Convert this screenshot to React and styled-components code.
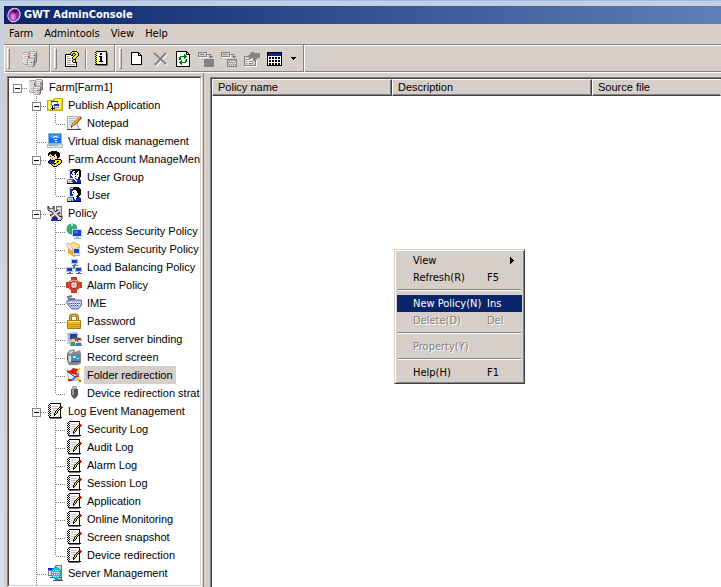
import React from "react";
import styled, { createGlobalStyle, css } from "styled-components";

const face = "#d6cec8";
const shadow = "#848284";
const dark = "#424142";
const navy = "#0a246a";
const tahoma = '"DejaVu Sans Condensed", Tahoma, sans-serif';
const sans = '"Liberation Sans", Arial, sans-serif';

const GlobalStyle = createGlobalStyle`
  * {
    box-sizing: border-box;
  }
  body {
    margin: 0;
    overflow: hidden;
    font: 11px/18px ${sans};
    color: #000;
  }
  button {
    font: inherit;
    color: inherit;
    border: 0;
    padding: 0;
    background: none;
  }
`;

const Desktop = styled.div`
  height: 100vh;
  padding: 5px 0 0 4px;
  border-top: 1px solid #9dbde4;
  background: linear-gradient(#c5cfe2, #d4dff0);
`;

const Window = styled.main`
  display: flex;
  flex-direction: column;
  height: 100%;
  background: ${face};
`;

const TitleBar = styled.header`
  display: flex;
  align-items: center;
  gap: 2px;
  height: 18px;
  padding-left: 2px;
  color: #fff;
  background: linear-gradient(to right, ${navy}, #5f80b6);
`;

const Title = styled.h1`
  margin: 0;
  font: bold 11px/18px ${tahoma};
`;

const MenuBar = styled.nav`
  display: flex;
  gap: 11px;
  height: 20px;
  padding-left: 5px;
  font-family: ${tahoma};
`;

const MenuButton = styled.button`
  line-height: 20px;
`;

const Toolbar = styled.div`
  display: flex;
  height: 29px;
  border-top: 1px solid ${shadow};
  border-bottom: 1px solid #fff;
  box-shadow: inset 1px 1px #fff, inset 0 -1px ${shadow};
`;

const Band = styled.div`
  display: flex;
  align-items: center;
  padding: 1px ${p => p.$end || 3}px 1px 3px;
  border-right: 1px solid ${shadow};
  box-shadow: 1px 0 #fff;
  margin-right: 1px;
`;

const Grip = styled.span`
  width: 3px;
  height: 21px;
  margin-right: ${p => p.$gap || 3}px;
  border: 1px solid;
  border-color: #fff ${shadow} ${shadow} #fff;
`;

const ToolButton = styled.button`
  display: flex;
  align-items: center;
  justify-content: center;
  width: ${p => (p.$narrow ? 14 : 23)}px;
  height: 22px;
`;

const Separator = styled.span`
  width: 2px;
  height: 20px;
  margin: 0 2px;
  border-left: 1px solid ${shadow};
  border-right: 1px solid #fff;
`;

const Body = styled.div`
  display: flex;
  flex: 1;
  min-height: 0;
`;

const Side = styled.aside`
  display: flex;
  flex: none;
  width: 200px;
  padding: 3px 1px 0 3px;
  border-right: 1px solid ${shadow};
`;

const TreeFrame = styled.div`
  display: flex;
  flex: 1;
  min-width: 0;
  border: 1px solid;
  border-color: ${shadow} #fff #fff ${shadow};
`;

const Tree = styled.ul`
  flex: 1;
  min-width: 0;
  margin: 0;
  padding: 0;
  overflow: hidden;
  list-style: none;
  background: #fff;
  border: 1px solid;
  border-color: ${dark} ${face} ${face} ${dark};
`;

const Row = styled.li`
  display: flex;
  height: 18px;
  white-space: nowrap;
`;

const dotsDown = "repeating-linear-gradient(#848284 0 1px, transparent 1px 2px)";
const dotsAcross = "repeating-linear-gradient(90deg, #848284 0 1px, transparent 1px 2px)";

const Guide = styled.span`
  flex: none;
  width: 19px;
  padding: 6px 0 0 4px;
  background-image: ${p => (p.$down ? dotsDown : "none")}, ${p => (p.$across ? dotsAcross : "none")};
  background-size: 1px ${p => (p.$down === "half" ? 10 : 18)}px, 10px 1px;
  background-position: 8px 0, 9px 10px;
  background-repeat: no-repeat;
`;

const Expander = styled.button`
  display: block;
  width: 9px;
  height: 9px;
  border: 1px solid ${shadow};
  background: linear-gradient(#000, #000) center / 5px 1px no-repeat #fff;
`;

const Label = styled.span`
  margin-left: 2px;
  padding: 0 3px;
  background: ${p => (p.$selected ? face : "none")};
`;

const ListFrame = styled.section`
  position: relative;
  display: flex;
  flex: 1;
  min-width: 0;
  margin: 4px 0 0 6px;
  border-top: 1px solid ${shadow};
  border-left: 1px solid ${shadow};
`;

const List = styled.div`
  flex: 1;
  min-width: 0;
  border-top: 1px solid ${dark};
  border-left: 1px solid ${dark};
  background: #fff;
`;

const Table = styled.table`
  width: 100%;
  table-layout: fixed;
  border-collapse: separate;
  border-spacing: 0;
`;

const Th = styled.th`
  width: ${p => p.$width || "auto"};
  height: 17px;
  padding: 0 5px;
  font-weight: 400;
  line-height: 15px;
  text-align: left;
  background: ${face};
  border: 1px solid;
  border-color: #fff ${p => (p.$width ? dark : face)} ${dark} #fff;
  box-shadow: ${p => (p.$width ? css`inset -1px -1px ${shadow}` : css`inset 0 -1px ${shadow}`)};
`;

const ContextMenu = styled.div`
  position: absolute;
  left: 183px;
  top: 171px;
  width: 131px;
  padding: 2px;
  font-family: ${tahoma};
  background: ${face};
  border: 1px solid;
  border-color: ${face} ${dark} ${dark} ${face};
  box-shadow: inset 1px 1px #fff, inset -1px -1px ${shadow};
`;

const MenuItem = styled.button`
  display: grid;
  grid-template-columns: 74px 1fr 8px;
  align-items: center;
  width: 100%;
  height: 17px;
  padding: 0 4px 0 16px;
  line-height: 17px;
  text-align: left;
  white-space: nowrap;
  ${p => p.$active && css`
    color: #fff;
    background: ${navy};
  `}
  &:disabled {
    color: ${shadow};
    text-shadow: 1px 1px #fff;
  }
`;

const MenuRule = styled.hr`
  height: 2px;
  margin: 3px 1px 4px;
  border: 0;
  border-top: 1px solid ${shadow};
  border-bottom: 1px solid #fff;
`;

const IconSvg = styled.svg`
  flex: none;
  display: block;
  margin-top: ${p => (p.$row ? 1 : 0)}px;
`;

const palette = {
  k: "#000",
  w: "#fff",
  e: "#e6e6e6",
  l: "#c4c4c4",
  g: "#a4a4a4",
  d: "#707070",
  b: "#0a28c8",
  y: "#ffec30",
  r: "#d80000",
  n: "#20b020",
  f: "#ffe0b0",
  o: "#e8a010",
};

// small bitmaps, one letter of the palette for each pixel
function Pixels({ rows }) {
  return rows.map((row, y) =>
    [...row.matchAll(/([a-z])\1*/g)].map(m => (
      <rect key={y + "-" + m.index} x={m.index} y={y} width={m[0].length} height="1" fill={palette[m[1]]} />
    ))
  );
}

const farmRows = [
  "........gggggg..",
  "..ggggggeeeeeed.",
  ".geeeeedlllllld.",
  ".ellllggeeeelgd.",
  ".eeeeeggllllrgd.",
  ".ellllrgeeeelgd.",
  ".eeeeegdllllggd.",
  ".ellllggggggggd.",
  ".eeeegeeeeeedgd.",
  ".elllglllllldgd.",
  ".eeeegeeeelgdgd.",
  ".elllglllrlgdd..",
  ".geeegeeeelgd...",
  "..gggglllllgd...",
  ".....geeeelgd...",
  "......gggggd....",
];

const logRows = [
  "...kkkkkkkkkkk..",
  "..kwwwwwwwwwwk..",
  ".kwkwwwwwwwwwk..",
  "..kwwllllllwwkr.",
  ".kwkwwwwwwwwkrrr",
  "..kwwllllllkykr.",
  ".kwkwwwwwwkykk..",
  "..kwwllllkykwk..",
  ".kwkwwwwkykwwk..",
  "..kwwllwkykwwk..",
  ".kwkwwwkykwwwk..",
  "..kwwllkkwwwwk..",
  ".kwkwwwkwwwwwk..",
  "..kwwwwwwwwwwk..",
  "..kkkkkkkkkkkkk.",
  "...ddddddddddd..",
];

const helpRows = [
  "........kkkkk...",
  ".......kyyyyyk..",
  "......kyykkyyyk.",
  ".kkkkkkyk..kyyk.",
  ".kwwwwwkk.kyyyk.",
  ".kwggwwwwkyyyk..",
  ".kwwwwwwkyyyk...",
  ".kwggggwkyyk....",
  ".kwwwwwwwkkk....",
  ".kwggggwkyyk....",
  ".kwwwwwwkyyk....",
  ".kwggggwwkkkk...",
  ".kwwwwwwwwwwk...",
  ".kwggggggggwk...",
  ".kwwwwwwwwwwk...",
  ".kkkkkkkkkkkk...",
];

const aboutRows = [
  "...kkkkkkkkkkk..",
  "..kwywywywywwk..",
  "...kwwwkkwwwykd.",
  "..kywwwkkwwwwkd.",
  "...kwwwwwwwwykd.",
  "..kywwkkkwwwwkd.",
  "...kwwwkkwwwykd.",
  "..kywwwkkwwwwkd.",
  "...kwwwkkwwwykd.",
  "..kywwwkkwwwwkd.",
  "...kwwkkkkwwykd.",
  "..kywwwwwwwwwkd.",
  "...kwywywywywkd.",
  "..kkkkkkkkkkkkd.",
  "....ddddddddddd.",
];

const userRows = [
  "....ddddkkkkk...",
  "...deeekkkkkkk..",
  "...ebbbkkkkkkkk.",
  "...ebbkwwwkkkkk.",
  "...ebbwwwwwkkkk.",
  "...ebbwkwwwkkkk.",
  "...ebbwwwwwwkkk.",
  "...ebbbwwwwwkkk.",
  "...ebbbwwwwkkk..",
  "...eeeewwwkkk...",
  "..dddddkwwwkbb..",
  ".deeeeekwwkbbbb.",
  ".deggglbbwbbbbb.",
  ".dellnebbbbbbbb.",
  ".kkkkkkkkkkkkkk.",
];

const groupRows = [
  "....dddkkkkkkk..",
  "...deekkkkkkkkk.",
  "...ebkkwwkkkwkk.",
  "...ebkwwkkkwwkk.",
  "...ebkwwwkwwwkk.",
  "...ebwkwwkwkwkk.",
  "...ebwwwwwwwwkk.",
  "...ebbwwwkwwwkk.",
  "...ebbbwwwwwkk..",
  "...eeeewwkwwkk..",
  "..dddddbwwkbbb..",
  ".deeeedbbwwbbbb.",
  ".degggbbbbwbbbb.",
  ".dellelbbbbbbbb.",
  ".kkkkkkkkkkkkkk.",
];

const accountRows = [
  "....kkkkkk......",
  "..kkkkkkkkkk....",
  ".kkkkkkkkkkkk...",
  ".kkfkkkkfkkkk...",
  ".kfffkkffkkkk...",
  "..fkfffkffkkk...",
  "..ffffffffkk....",
  "...ffrffffk.....",
  "...kffffkkkkkk..",
  "..kbkkkkyyyyyok.",
  ".kbbbbbkyykkyyk.",
  ".kbbbbkyyokyyok.",
  "..kkrbbkkyyyok..",
  "....kyykyyykk...",
  ".....kyyyok.....",
  "......kkkk......",
];

const smallPc = (x, y) => (
  <g transform={`translate(${x} ${y})`}>
    <path fill="#b4c4ec" d="M0 0h7v5H0z" />
    <path fill="#1c3fc0" d="M1 1h5v3H1z" />
    <path fill="#5c6c9c" d="M3 5h2v1H3zM1 6h6v1H1z" />
  </g>
);

const icons = {
  logo: (
    <g shapeRendering="auto">
      <ellipse cx="8" cy="8" rx="6" ry="7" transform="rotate(25 8 8)" fill="#8a2a9c" stroke="#e8dcec" />
      <ellipse cx="7" cy="10" rx="3" ry="4" fill="#c860d4" />
      <path d="M6 5l2-2h3l1 2-3 1z" fill="#401050" />
      <path d="M7 8v4" stroke="#f4c8f8" />
    </g>
  ),
  farm: <Pixels rows={farmRows} />,
  publish: (
    <>
      <path fill="#fff060" stroke="#b8a828" d="M.5 3.500h6l1-2h8v12H.5z" />
      <path fill="#dcc828" d="M1 12h14v1H1zM14 3h1v10h-1z" />
      <path fill="#fff" stroke="#8490c0" d="M4.500 4.500h6v4h-6zM7.500 7.500h4v3h-4z" />
      <path fill="#2030a0" d="M4 4h7v1H4zM7 7h5v2H7z" />
      <path fill="#000" d="M6 9v4H5v-1H4v-1h1V9zM6 11h2v1H6z" />
    </>
  ),
  notepad: (
    <>
      <path fill="#ececec" stroke="#b0b0b0" d="M1.500 1.500h10v9l2 4h-12z" />
      <path stroke="#c0c0c0" d="M3 3.500h7M3 5.500h7M3 7.500h5M3 9.500h4" />
      <path stroke="#444" d="M1 14.500h14" />
      <g shapeRendering="auto">
        <path stroke="#683000" strokeWidth="3" d="M7 10l8-8" />
        <path stroke="#ffa424" strokeWidth="2" d="M7 10l7-8" />
        <path fill="#222" d="M5 13v-2l1-1 1 1z" />
      </g>
    </>
  ),
  disk: (
    <>
      <path fill="#1874e8" stroke="#88b8ec" d="M1.500 .5h13v10h-13z" />
      <path fill="#4aa4ff" d="M3 2h10v3H3z" />
      <path fill="none" stroke="#fff" d="M5.500 5.500l2-2h2l2 2M6.500 7.500l1-1h2l1 1" />
      <path fill="#fff" d="M8 8h2v1H8z" />
      <path fill="#e6e8ec" stroke="#b4bcc4" d="M.5 11.500h15v3H.5z" />
      <path fill="#68b8d8" d="M2 12h9v1H2z" />
    </>
  ),
  account: <Pixels rows={accountRows} />,
  group: <Pixels rows={groupRows} />,
  user: <Pixels rows={userRows} />,
  policy: (
    <>
      <path fill="#c4c4c4" stroke="#777" d="M9.500 1.500h5v10h-5z" />
      <path stroke="#eee" d="M10 3.500h4M10 6.500h4" />
      <path fill="#1028d0" d="M6 12h4v1h1v1h1v2H4v-2h1v-1h1z" />
      <g shapeRendering="auto">
        <path fill="none" stroke="#222" strokeWidth="4" d="M4 4l8 9M12 6l-8 6" />
        <path fill="#d8d8d8" stroke="#222" d="M1 1v4l3 2 3-2V1L5 4H3zM15 11v3l-2 2-3-1v-2z" />
        <path fill="none" stroke="#e0e0e0" strokeWidth="2" d="M4 4l9 10M12 6l-8 6" />
      </g>
      <path fill="#e02010" d="M12 8h1v1h-1zM3 9h1v1H3z" />
    </>
  ),
  access: (
    <>
      <g shapeRendering="auto">
        <circle cx="6" cy="6" r="5.500" fill="#2e8ce4" />
        <path fill="#38b838" d="M2 3l4-2 1 3-2 2 1 3-2 1-3-4zM8 1l3 3-2 3-2-2z" />
        <path fill="#b4e8fc" d="M5 1h2v2H5z" />
      </g>
      <path fill="#c8d8fc" d="M6 6h10v8H6z" />
      <path fill="#1840c4" d="M7 7h8v6H7z" />
      <path fill="#4c7ce8" d="M8 8h4v2H8z" />
      <path fill="#98a8c8" d="M10 14h3v1h2v1H8v-1h2z" />
    </>
  ),
  system: (
    <>
      <g shapeRendering="auto">
        <path fill="#eca824" d="M2 3l6-2 6 3v9l-6 3-6-4z" />
        <path fill="#ffe494" d="M2 4l6-2 6 3-5 3z" />
        <path fill="#f4f4f4" stroke="#bbb" d="M1 2l2 1 4 5-2 2-4-5z" />
      </g>
      <path fill="#c8d4f4" d="M7 7h7v7H7z" />
      <path fill="#1c44c8" d="M8 8h5v4H8z" />
      <path fill="#a8b0c4" d="M8 14h6v1H8z" />
    </>
  ),
  balance: (
    <>
      <path fill="none" stroke="#38b038" strokeWidth="2" d="M8 6v4M4 11l4-3 4 3" />
      {smallPc(5, 0)}
      {smallPc(0, 8)}
      {smallPc(9, 8)}
    </>
  ),
  alarm: (
    <g shapeRendering="auto">
      <path fill="#cc3828" d="M5 0h6v3l3 2h2v6h-2l-3 2v3H5v-3l-3-2H0V5h2l3-2z" />
      <circle cx="8" cy="8" r="6" fill="#d84838" />
      <path fill="#f09484" d="M5 3h6l2 2H3z" />
      <circle cx="8" cy="8" r="3.500" fill="#fff" stroke="#8c1c10" />
      <path stroke="#d89088" d="M8 5v6M5 8h6" />
    </g>
  ),
  ime: (
    <g shapeRendering="auto">
      <path fill="none" stroke="#777" strokeWidth="2" d="M8 6V4L3 4l-1-2 4-1" />
      <path fill="#b4bce4" stroke="#5c68a8" d="M1 6l3-1h11l1 2-1 4-3 3H6L1 9z" />
      <path stroke="#fff" strokeDasharray="1 1" d="M3 7.500h11M5 9.500h9" />
      <path stroke="#384890" strokeDasharray="1 1" d="M3 8.500h11M5 10.500h8" />
    </g>
  ),
  lock: (
    <g shapeRendering="auto">
      <path fill="none" stroke="#8c6c14" strokeWidth="3" d="M4.500 8V4q0-2 3.500-2t3.500 2v4" />
      <path fill="none" stroke="#e8cc68" d="M4.500 8V4q0-2 3.500-2t3.500 2v4" />
      <path fill="#ecb818" stroke="#a87c08" d="M1.500 7.500h13v8h-13z" />
      <path stroke="#ffec88" d="M2 8.500h12" />
      <path stroke="#c89410" d="M2 11.500h12M2 13.500h12" />
    </g>
  ),
  binding: (
    <g shapeRendering="auto">
      <path fill="#b0bcd4" d="M1 2l9-1 2 1v8L2 11z" />
      <path fill="#1c40bc" d="M4 3h7v5H4z" />
      <path fill="#c4ccd8" d="M1 11h7v2H1z" />
      <circle cx="8" cy="8" r="2.500" fill="#785030" />
      <circle cx="13" cy="9" r="2.500" fill="#785030" />
      <path fill="#f4c49c" d="M6 8h3v3H6zM12 9h3v3h-3z" />
      <path fill="#38a060" d="M4 15l1-4h4l1 4z" />
      <path fill="#3c74d4" d="M10 15v-3h5l1 3z" />
    </g>
  ),
  camera: (
    <g shapeRendering="auto">
      <path fill="#888" d="M1 4l3-3 4-1 1 3 5-2 1 4v9l-3 2H3l-2-4z" />
      <path fill="#ddd" d="M3 3l4-2v2L4 5zM2 7h3v6H3z" />
      <path fill="#3c8cc8" d="M6 6h8v6H6z" />
      <path fill="#c8ecff" d="M7 7h3v2H7zM11 9h2v1h-2z" />
      <path fill="#444" d="M5 12h9v1H5zM1 7h1v4H1z" />
    </g>
  ),
  folder: (
    <g shapeRendering="auto">
      <path fill="#e8f0ff" stroke="#a8b4cc" d="M1 3l4 1 8 2-2 7-8 1z" />
      <path fill="#d81818" d="M4 4l3-3 5 1 1 3-3 3-6-2z" />
      <path stroke="#222" d="M1 4l12 9" />
      <path stroke="#ffd020" strokeWidth="2" d="M11 6l3-5M10 10l4 4" />
      <path stroke="#3c74e0" strokeWidth="2" d="M13 7l-7 6" />
      <path fill="#e02020" d="M2 12h4v2H2zM9 9h4v1H9zM2 4h3v2H2z" />
      <path fill="#e84020" d="M13 13h2v2h-2z" />
    </g>
  ),
  usb: (
    <g shapeRendering="auto">
      <path fill="#ddd" stroke="#999" d="M6.500 1.500h4v2h-4z" />
      <path fill="#555" d="M5 4h7v6l-2 3H7l-2-3z" />
      <path fill="#999" d="M6 4h2v6H6z" />
      <path stroke="#777" strokeWidth="2" d="M8.500 12v2" />
    </g>
  ),
  log: <Pixels rows={logRows} />,
  server: (
    <>
      <path fill="#d4d4d4" stroke="#777" d="M8.500 .5h6v14h-6z" />
      <path fill="#1028d0" d="M1 3h9v2H1z" />
      <path fill="#fff" stroke="#777" d="M1.500 5.500h7v5h-7z" />
      <path fill="#555" d="M3 12h12v1H3zM6 15h10v1H6z" />
      <g shapeRendering="auto">
        <ellipse cx="9" cy="8" rx="5" ry="5.500" fill="#20c8e8" stroke="#0898b8" />
        <path stroke="#d8ffff" strokeDasharray="1 1" d="M6 5.500h6M5 7.500h8M5 9.500h8M6 11.500h6" />
      </g>
    </>
  ),
  board: (
    <>
      <path fill="#fff" stroke="#1028b0" d="M.5 2.500h15v12H.5z" />
      <path fill="#1840e0" d="M0 2h16v4H0z" />
    </>
  ),
  help: <Pixels rows={helpRows} />,
  about: <Pixels rows={aboutRows} />,
  blank: (
    <>
      <path fill="#fff" stroke="#000" d="M2.500 1.500h7l3 3v9h-10z" />
      <path fill="#000" d="M9 1h1v3h3v1H9z" />
    </>
  ),
  cross: (
    <g shapeRendering="auto">
      <path stroke="#fff" strokeWidth="2" d="M3 3l12 11M15 3L4 15" />
      <path stroke="#848284" strokeWidth="2" d="M2 2l12 11M14 2L3 14" />
    </g>
  ),
  refresh: (
    <>
      <path fill="#fff" stroke="#000" d="M1.500 .5h10l3 3v12h-13z" />
      <path fill="#000" d="M11 0h1v3h3v1h-4z" />
      <path fill="#008000" d="M5 5h4V3h1v1h1v1h1v1h-1v1h-1v1H9V6H6v3H4V6h1zM11 8h1v3h-1v1H7v2H6v-1H5v-1H4v-1h1v-1h1V9h1v2h3V9h1z" />
    </>
  ),
  copyTo: (
    <>
      <path fill="#fff" d="M1 2h9v5H1zM7 8h10v9H7z" />
      <path fill="#d6cec8" d="M1 2h7v3H1z" />
      <path fill="none" stroke="#848284" d="M.5 1.500h8v4h-8zM2 3.500h4M9 3.500h3.500v3" />
      <path fill="#848284" d="M10 5h5l-2 3zM6 8h10v8H6z" />
    </>
  ),
  moveTo: (
    <>
      <path fill="#fff" d="M1 2h9v5H1zM7 8h10v9H7z" />
      <path fill="#d6cec8" d="M1 2h7v3H1z" />
      <path fill="none" stroke="#848284" d="M.5 1.500h8v4h-8zM2 3.500h4M9 3.500h3.500v3" />
      <path fill="#848284" d="M10 5h5l-2 3z" />
      <path fill="#b0aca8" stroke="#848284" d="M6.500 8.500h9v7h-9z" />
      <path stroke="#eee" strokeDasharray="1 1" d="M7 10.500h8M8 12.500h7M7 14.500h8" />
    </>
  ),
  property: (
    <>
      <path fill="none" stroke="#fff" d="M1.500 6.500h11v9h-11z" />
      <path fill="#d6cec8" stroke="#848284" d="M.5 5.500h11v9H.5z" />
      <path fill="#848284" d="M7 1h3v1h6v5h-3v2h-2v1H9V7H7v1H5V6H4V4h2V2h1z" />
      <path stroke="#848284" d="M2 8.500h3M2 10.500h1M5 10.500h4M2 12.500h1M5 12.500h4" />
      <path stroke="#fff" d="M2 7.500h2M2 9.500h7M2 11.500h7" />
    </>
  ),
  views: (
    <>
      <path fill="#fff" stroke="#000" d="M.5 1.500h14v13H.5z" />
      <path fill="#0a24a0" d="M1 2h13v3H1z" />
      <path stroke="#000" strokeDasharray="2 1" strokeWidth="2" d="M2 7h11M2 10h11M2 13h11" />
    </>
  ),
};

function Icon({ name, row }) {
  return (
    <IconSvg $row={row} width="16" height="16" viewBox="0 0 16 16" fill="none" shapeRendering="crispEdges" aria-hidden="true">
      {icons[name]}
    </IconSvg>
  );
}

const tree = [
  { depth: 0, icon: "farm", text: "Farm[Farm1]", open: true },
  { depth: 1, icon: "publish", text: "Publish Application", open: true },
  { depth: 2, icon: "notepad", text: "Notepad" },
  { depth: 1, icon: "disk", text: "Virtual disk management" },
  { depth: 1, icon: "account", text: "Farm Account ManageMent", open: true },
  { depth: 2, icon: "group", text: "User Group" },
  { depth: 2, icon: "user", text: "User" },
  { depth: 1, icon: "policy", text: "Policy", open: true },
  { depth: 2, icon: "access", text: "Access Security Policy" },
  { depth: 2, icon: "system", text: "System Security Policy" },
  { depth: 2, icon: "balance", text: "Load Balancing Policy" },
  { depth: 2, icon: "alarm", text: "Alarm Policy" },
  { depth: 2, icon: "ime", text: "IME" },
  { depth: 2, icon: "lock", text: "Password" },
  { depth: 2, icon: "binding", text: "User server binding" },
  { depth: 2, icon: "camera", text: "Record screen" },
  { depth: 2, icon: "folder", text: "Folder redirection", selected: true },
  { depth: 2, icon: "usb", text: "Device redirection strategy" },
  { depth: 1, icon: "log", text: "Log Event Management", open: true },
  { depth: 2, icon: "log", text: "Security Log" },
  { depth: 2, icon: "log", text: "Audit Log" },
  { depth: 2, icon: "log", text: "Alarm Log" },
  { depth: 2, icon: "log", text: "Session Log" },
  { depth: 2, icon: "log", text: "Application" },
  { depth: 2, icon: "log", text: "Online Monitoring" },
  { depth: 2, icon: "log", text: "Screen snapshot" },
  { depth: 2, icon: "log", text: "Device redirection" },
  { depth: 1, icon: "server", text: "Server Management" },
  { depth: 1, icon: "board", text: "Bulletin Board System" },
];

function TreeRow({ item, next }) {
  const lastChild = item.depth === 2 && (!next || next.depth < 2);
  return (
    <Row>
      {item.depth > 0 && <Guide />}
      {item.depth > 1 && <Guide $down="full" />}
      <Guide $across $down={item.depth > 0 && (lastChild ? "half" : "full")}>
        {item.open && <Expander aria-label={"Collapse " + item.text} />}
      </Guide>
      <Icon name={item.icon} row />
      <Label $selected={item.selected}>{item.text}</Label>
    </Row>
  );
}

const listTools = [
  ["blank", "New"],
  ["cross", "Delete"],
  ["refresh", "Refresh"],
  ["copyTo", "Copy"],
  ["moveTo", "Move"],
  ["property", "Property"],
  ["views", "Views"],
];

function Tool({ name, label }) {
  return (
    <ToolButton aria-label={label}>
      <Icon name={name} />
    </ToolButton>
  );
}

function App() {
  return (
    <>
      <GlobalStyle />
      <Desktop>
        <Window>
          <TitleBar>
            <Icon name="logo" />
            <Title>GWT AdminConsole</Title>
          </TitleBar>
          <MenuBar>
            {["Farm", "Admintools", "View", "Help"].map(m => <MenuButton key={m}>{m}</MenuButton>)}
          </MenuBar>
          <Toolbar>
            <Band $end={8}>
              <Grip $gap={8} />
              <Tool name="farm" label="Farm" />
            </Band>
            <Band $end={2}>
              <Grip />
              <Tool name="help" label="Help" />
              <Separator />
              <Tool name="about" label="About" />
            </Band>
            <Band>
              <Grip />
              {listTools.map(([name, label]) => <Tool key={name} name={name} label={label} />)}
              <ToolButton $narrow aria-label="Choose view">
                <svg width="5" height="3" viewBox="0 0 5 3" shapeRendering="crispEdges"><path d="M0 0h5v1H4v1H3v1H2V2H1V1H0z" /></svg>
              </ToolButton>
            </Band>
          </Toolbar>
          <Body>
            <Side>
              <TreeFrame>
                <Tree>
                  {tree.map((item, i) => <TreeRow key={i} item={item} next={tree[i + 1]} />)}
                </Tree>
              </TreeFrame>
            </Side>
            <ListFrame>
              <List>
                <Table>
                  <thead>
                    <tr>
                      <Th $width="180px">Policy name</Th>
                      <Th $width="200px">Description</Th>
                      <Th>Source file</Th>
                    </tr>
                  </thead>
                </Table>
              </List>
              <ContextMenu>
                <MenuItem>
                  <span>View</span><span />
                  <svg width="4" height="7" viewBox="0 0 4 7" shapeRendering="crispEdges"><path d="M0 0h1v1h1v1h1v1h1v1H3v1H2v1H1v1H0z" /></svg>
                </MenuItem>
                <MenuItem><span>Refresh(R)</span><span>F5</span></MenuItem>
                <MenuRule />
                <MenuItem $active><span>New Policy(N)</span><span>Ins</span></MenuItem>
                <MenuItem disabled><span>Delete(D)</span><span>Del</span></MenuItem>
                <MenuRule />
                <MenuItem disabled><span>Property(Y)</span></MenuItem>
                <MenuRule />
                <MenuItem><span>Help(H)</span><span>F1</span></MenuItem>
              </ContextMenu>
            </ListFrame>
          </Body>
        </Window>
      </Desktop>
    </>
  );
}

export default App;
